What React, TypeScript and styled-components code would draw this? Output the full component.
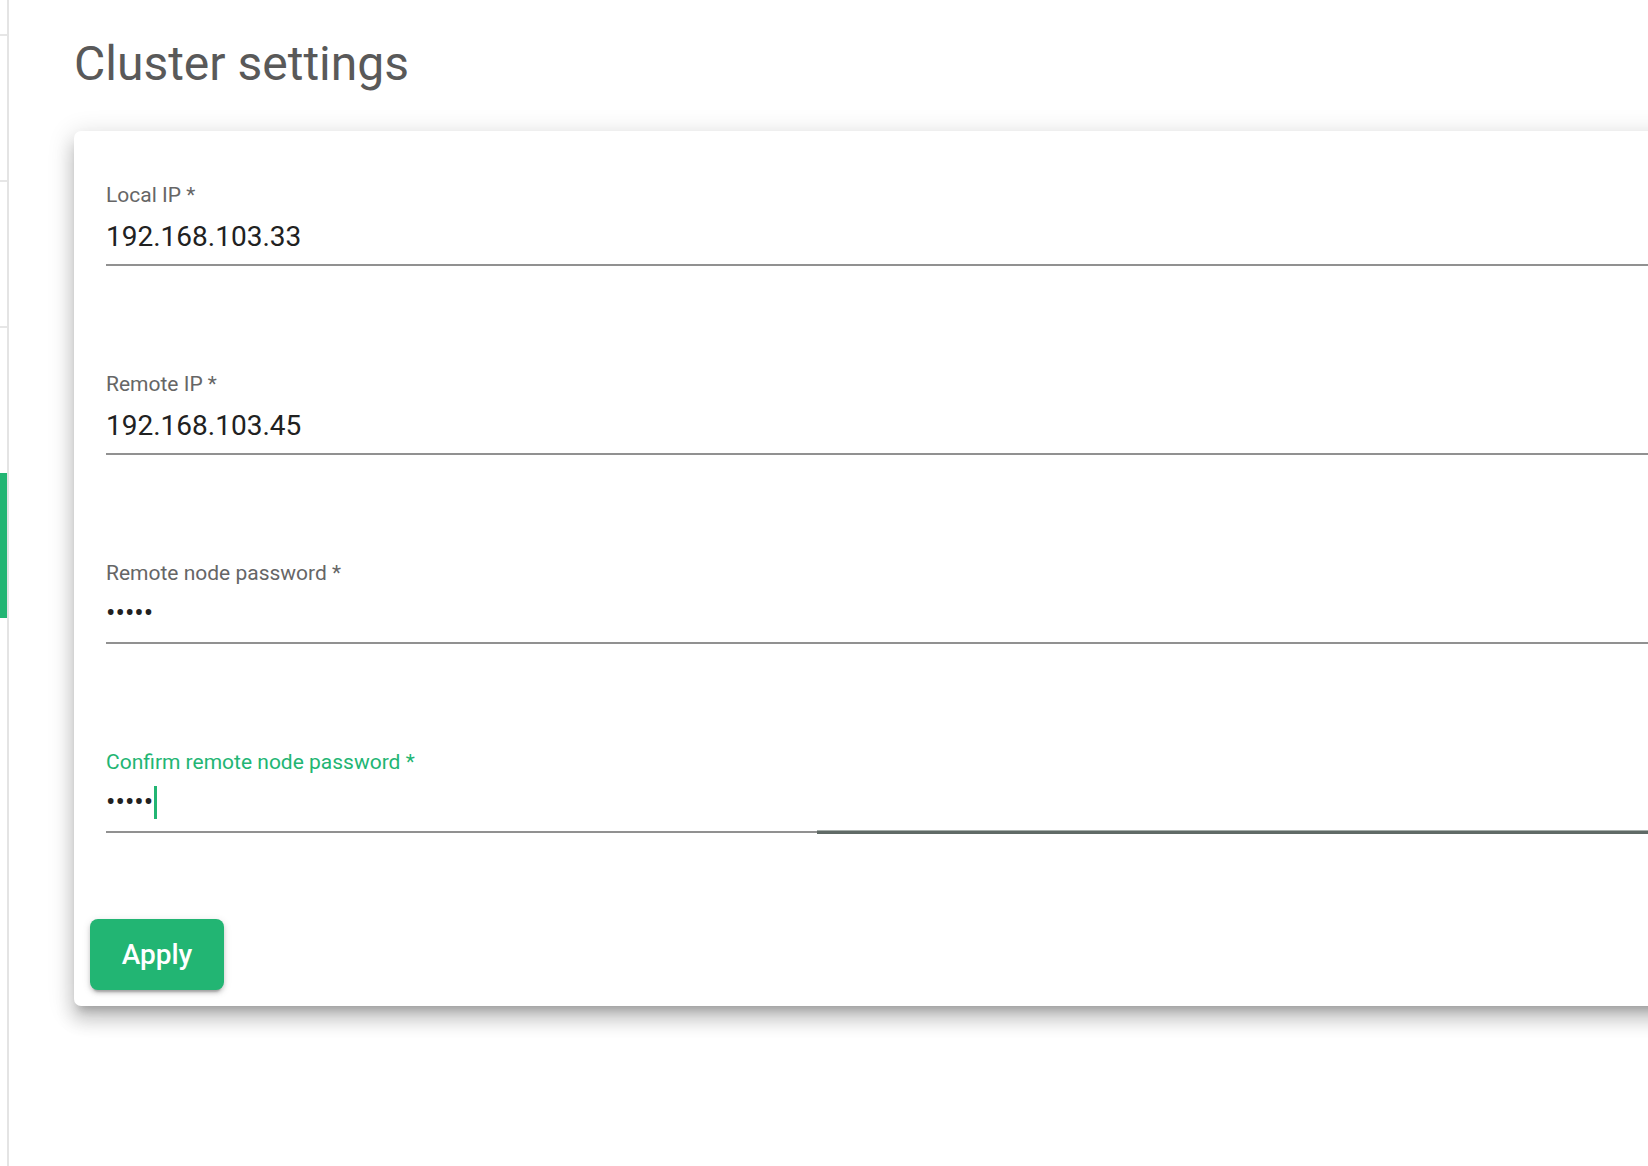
import React from "react";
import styled, { createGlobalStyle } from "styled-components";

const GREEN = "#22b573";

const GlobalStyle = createGlobalStyle`
  html, body {
    margin: 0;
    padding: 0;
    background: #ffffff;
    overflow: hidden;
  }
  body {
    font-family: Roboto, "Noto Sans", "Liberation Sans", sans-serif;
  }
  * { box-sizing: border-box; }
`;

const Page = styled.div`
  display: flex;
  width: 1648px;
  height: 1166px;
  overflow: hidden;
`;

const Sidebar = styled.nav`
  flex: 0 0 9px;
  display: flex;
  flex-direction: column;
  border-right: 2px solid #e4e4e4;
`;

const SideItem = styled.div<{ $h: number; $divider?: boolean; $active?: boolean }>`
  flex: 0 0 ${(p) => p.$h}px;
  border-bottom: ${(p) => (p.$divider ? "2px solid #e6e6e6" : "none")};
  background: ${(p) => (p.$active ? GREEN : "transparent")};
`;

const Main = styled.main`
  flex: 1;
  min-width: 0;
  display: flex;
  flex-direction: column;
  padding: 34px 0 0 65px;
`;

const Title = styled.h1`
  margin: 0;
  font-size: 48px;
  line-height: 59px;
  font-weight: 400;
  color: #595959;
`;

const Card = styled.section`
  margin-top: 38px;
  width: 1700px;
  flex-shrink: 0;
  background: #ffffff;
  border-radius: 7px;
  box-shadow: 0px 9px 9px -5px rgba(0, 0, 0, 0.2),
    0px 14px 17px 2px rgba(0, 0, 0, 0.14),
    0px 5px 24px 4px rgba(0, 0, 0, 0.12);
  padding: 52px 0 16px 16px;
  display: flex;
  flex-direction: column;
`;

const Fields = styled.div`
  display: flex;
  flex-direction: column;
  gap: 106px;
  padding-left: 16px;
`;

const Field = styled.div`
  display: flex;
  flex-direction: column;
`;

const Label = styled.label<{ $focused?: boolean }>`
  height: 24px;
  font-size: 21px;
  line-height: 24px;
  color: ${(p) => (p.$focused ? GREEN : "#666666")};
  white-space: nowrap;
`;

const InputBox = styled.div`
  position: relative;
  margin-top: 1px;
  padding: 7px 0 9px;
  height: 58px;
  display: flex;
  align-items: center;
  border-bottom: 2px solid #919191;
  font-size: 28px;
  line-height: 40px;
  color: #212121;
`;

const Value = styled.span`
  white-space: nowrap;
  margin-top: 4px;
`;

const Dots = styled.span`
  white-space: nowrap;
`;

const Caret = styled.span`
  display: inline-block;
  width: 3px;
  height: 33px;
  background: ${GREEN};
  margin-left: 1px;
`;

const FocusLine = styled.span`
  position: absolute;
  left: 711px;
  right: 0;
  bottom: -3px;
  height: 4px;
  border-top: 1px solid #a6aeaa;
  background: #606a66;
`;

const ApplyButton = styled.button`
  margin-top: 86px;
  width: 134px;
  height: 71px;
  border: none;
  border-radius: 8px;
  background: ${GREEN};
  color: #ffffff;
  font-family: Roboto, "Noto Sans", "Liberation Sans", sans-serif;
  font-size: 28px;
  font-weight: 500;
  cursor: pointer;
  box-shadow: 0px 5px 2px -3px rgba(0, 0, 0, 0.2),
    0px 3px 4px 0px rgba(0, 0, 0, 0.14),
    0px 2px 9px 0px rgba(0, 0, 0, 0.12);
`;

type FieldDef = {
  label: string;
  value: string;
  password?: boolean;
  focused?: boolean;
};

const fields: FieldDef[] = [
  { label: "Local IP *", value: "192.168.103.33" },
  { label: "Remote IP *", value: "192.168.103.45" },
  { label: "Remote node password *", value: "•••••", password: true },
  { label: "Confirm remote node password *", value: "•••••", password: true, focused: true },
];

export default function App() {
  return (
    <>
      <GlobalStyle />
      <Page>
        <Sidebar>
          <SideItem $h={36} $divider />
          <SideItem $h={146} $divider />
          <SideItem $h={146} $divider />
          <SideItem $h={145} />
          <SideItem $h={145} $active />
        </Sidebar>
        <Main>
          <Title>Cluster settings</Title>
          <Card>
            <Fields>
              {fields.map((f) => (
                <Field key={f.label}>
                  <Label $focused={f.focused}>{f.label}</Label>
                  <InputBox>
                    {f.password ? <Dots>{f.value}</Dots> : <Value>{f.value}</Value>}
                    {f.focused && <Caret />}
                    {f.focused && <FocusLine />}
                  </InputBox>
                </Field>
              ))}
            </Fields>
            <div>
              <ApplyButton>Apply</ApplyButton>
            </div>
          </Card>
        </Main>
      </Page>
    </>
  );
}
